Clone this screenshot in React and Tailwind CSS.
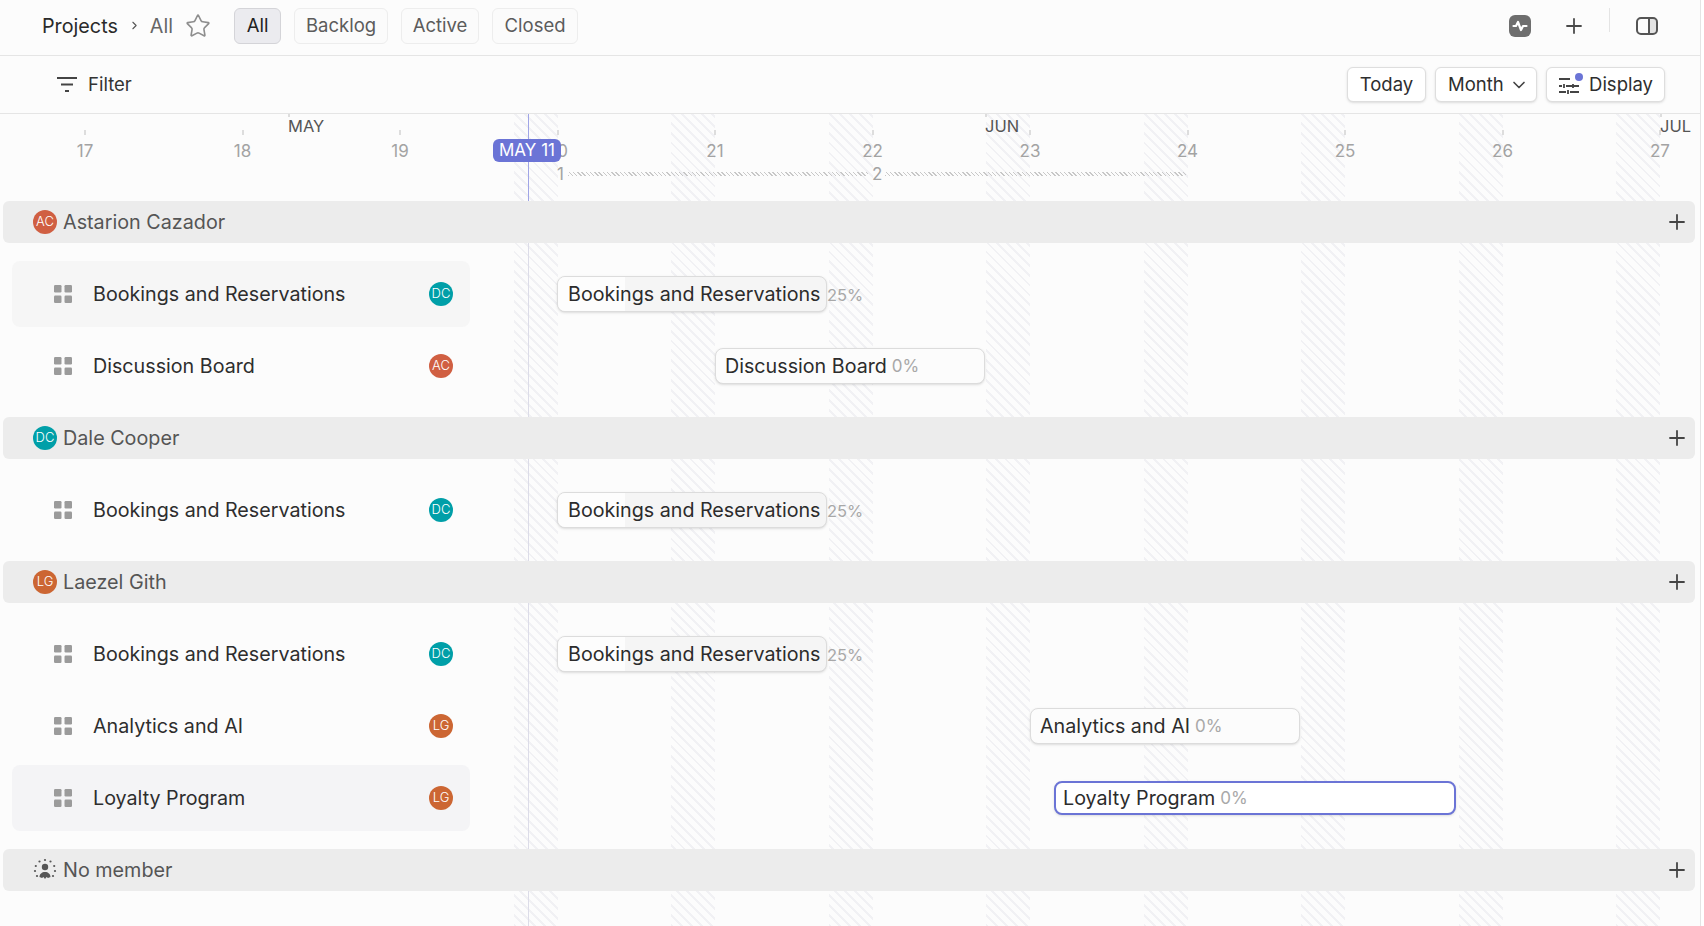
import { ChevronRight, Star, Plus, ChevronDown } from "lucide-react";

const days = [20, 21, 22, 23, 24, 25, 26, 27];
const hatch =
  "bg-[repeating-linear-gradient(45deg,#f1f1f4_0px,#f1f1f4_2px,transparent_2px,transparent_7px)]";
const weekDash =
  "bg-[repeating-linear-gradient(45deg,#c8c8c8_0px,#c8c8c8_1px,transparent_1px,transparent_3px)]";

const groups = [
  {
    name: "Astarion Cazador",
    initials: "AC",
    color: "bg-[#d05f42]",
    tasks: [
      { name: "Bookings and Reservations", who: "DC", color: "bg-[#009fa8]", left: "left-[557px]", pct: "25%", hover: "bg-[#f6f6f6]" },
      { name: "Discussion Board", who: "AC", color: "bg-[#d05f42]", left: "left-[715px]", pct: "0%" },
    ],
  },
  {
    name: "Dale Cooper",
    initials: "DC",
    color: "bg-[#009fa8]",
    tasks: [
      { name: "Bookings and Reservations", who: "DC", color: "bg-[#009fa8]", left: "left-[557px]", pct: "25%" },
    ],
  },
  {
    name: "Laezel Gith",
    initials: "LG",
    color: "bg-[#cc6633]",
    tasks: [
      { name: "Bookings and Reservations", who: "DC", color: "bg-[#009fa8]", left: "left-[557px]", pct: "25%" },
      { name: "Analytics and AI", who: "LG", color: "bg-[#cc6633]", left: "left-[1030px]", pct: "0%" },
      { name: "Loyalty Program", who: "LG", color: "bg-[#cc6633]", left: "left-[1054px]", pct: "0%", hover: "bg-[#f4f4f6]", selected: true },
    ],
  },
];

const Avatar = ({ text, color }) => (
  <div className={`w-6 h-6 rounded-full ${color} text-white text-[13px] font-light flex items-center justify-center shrink-0`}>
    {text}
  </div>
);

const Grip = () => (
  <svg width="18" height="18" viewBox="0 0 18 18" className="shrink-0" fill="#9b9b9b">
    <rect x="0" y="0" width="7.5" height="7.5" rx="1.2" />
    <rect x="10.5" y="0" width="7.5" height="7.5" rx="1.2" />
    <rect x="0" y="10.5" width="7.5" height="7.5" rx="1.2" />
    <rect x="10.5" y="10.5" width="7.5" height="7.5" rx="1.2" />
  </svg>
);

const GroupRow = ({ children, name }) => (
  <div className="relative h-[42px] ml-[3px] mr-[5px] bg-[#ececec] rounded-md flex items-center pl-[30px] pr-[6px] gap-[6px] text-[19.75px] text-[#555555]">
    {children}
    <span className="pt-[2px]">{name}</span>
    <Plus size={24} strokeWidth={1.8} className="ml-auto text-[#444444]" />
  </div>
);

const TaskBar = ({ task }) => {
  if (task.pct === "25%") {
    return (
      <div className={`absolute top-[15px] ${task.left} flex items-center`}>
        <div className="relative w-[270px] h-9 rounded-lg border border-[#dcdcdc] bg-[#f5f5f5] shadow-sm overflow-hidden flex items-center pl-[10px] text-[19.7px] text-[#2c2c2c]">
          <div className="absolute inset-y-0 left-0 w-[67px] bg-[#fdfdfd]" />
          <span className="relative pt-[2px]">{task.name}</span>
        </div>
        <span className="pt-[2px] text-[16.5px] text-[#a8a8a8]">25%</span>
      </div>
    );
  }
  return (
    <div
      className={`absolute ${task.left} flex items-center gap-[5px] rounded-lg text-[19.7px] text-[#2c2c2c] shadow-sm ${
        task.selected
          ? "top-[16px] w-[402px] h-[34px] border-2 border-[#6b74d6] bg-white pl-[7px]"
          : "top-[15px] w-[270px] h-9 border border-[#dcdcdc] bg-[#fcfcfc] pl-[9px]"
      }`}
    >
      <span className="pt-[2px]">{task.name}</span>
      <span className="pt-[2px] text-[17px] text-[#a8a8a8]">{task.pct}</span>
    </div>
  );
};

const TaskRow = ({ task }) => (
  <div className="relative h-[66px]">
    <div className={`ml-3 w-[458px] h-full rounded-lg flex items-center pl-[42px] pr-[17px] ${task.hover || ""}`}>
      <Grip />
      <span className="ml-[21px] pt-[2px] text-[19.7px] text-[#2e2e2e]">{task.name}</span>
      <div className="ml-auto">
        <Avatar text={task.who} color={task.color} />
      </div>
    </div>
    <TaskBar task={task} />
  </div>
);

const Tab = ({ label, active, className }) => (
  <button
    className={`h-9 rounded-md border text-[18.5px] ${className} ${
      active
        ? "bg-[#ebebef] border-[#d4d4d8] text-[#222222]"
        : "bg-[#fbfbfb] border-[#ededed] text-[#5c5c5c]"
    }`}
  >
    {label}
  </button>
);

const Btn = ({ children, className }) => (
  <button
    className={`h-[35px] flex items-center rounded-md border border-[#dedede] bg-white shadow-sm text-[18.5px] text-[#2e2e2e] ${className}`}
  >
    {children}
  </button>
);

const DayLabel = ({ day }) => (
  <div className="w-[157.5px] shrink-0 flex flex-col items-center">
    <div className="w-[2px] h-[5px] bg-[#dddddd]" />
    <span className="mt-[4px] text-[17px] leading-[24px] text-[#a3a3a3]">{day}</span>
  </div>
);

const MonthLabel = ({ label, left }) => (
  <div className={`absolute top-0 ${left} flex flex-col text-[16.5px] leading-[24px] text-[#555555]`}>
    <div className="w-[2px] h-[3px] bg-[#dddddd]" />
    <span className="-mt-[3px]">{label}</span>
  </div>
);

const App = () => {
  return (
    <div
      className="relative h-[926px] w-[1701px] overflow-hidden bg-[#fcfcfc] border-r border-[#e4e4e4]"
      style={{ fontFamily: "Inter, 'Noto Sans', sans-serif" }}
    >
      {/* hatched weekend columns sit behind everything */}
      <div className="absolute top-[114px] bottom-0 left-[400px] flex">
        {days.map((d) => (
          <div key={d} className="w-[157.5px] flex justify-end">
            <div className={`w-[44px] h-full ${hatch}`} />
          </div>
        ))}
      </div>
      {/* today line */}
      <div className="absolute top-[114px] bottom-0 left-[528px] w-px bg-[#dcdce8]" />
      <div className="absolute top-[114px] left-[528px] w-px h-[87px] bg-[#a0a5e6]" />

      <div className="relative">
        <div className="h-14 pb-[3px] border-b border-[#e5e5e5] flex items-center">
          <span className="ml-[42px] pt-[2px] text-[19.75px] text-[#2a2a2a]">Projects</span>
          <ChevronRight size={13} className="ml-[10px] mb-[2px] text-[#555555]" />
          <span className="ml-[9px] pt-[2px] text-[19.75px] text-[#666666]">All</span>
          <Star size={26} strokeWidth={1.5} className="ml-[12px] text-[#8e8e8e]" />
          <div className="ml-[23px] flex gap-[13px]">
            <Tab label="All" active className="w-[47px]" />
            <Tab label="Backlog" className="w-[94px]" />
            <Tab label="Active" className="w-[78px]" />
            <Tab label="Closed" className="w-[86px]" />
          </div>
          <div className="ml-auto flex items-center mr-[42px]">
            <div className="w-[22px] h-[22px] rounded-md bg-[#6e6e6e] flex items-center justify-center">
              <svg width="16" height="14" viewBox="0 0 16 14" fill="none" stroke="white" strokeWidth="2.2" strokeLinecap="round" strokeLinejoin="round">
                <path d="M1.5 7h2.500l2-4 3 8 2-4h3.500" />
              </svg>
            </div>
            <Plus size={24} strokeWidth={1.8} className="ml-[31px] text-[#4a4a4a]" />
            <div className="ml-[23px] w-px h-6 bg-[#e4e4e4] mb-[12px]" />
            <svg width="22" height="20" viewBox="0 0 22 20" fill="none" stroke="#555555" strokeWidth="2" className="ml-[26px]">
              <rect x="1" y="2" width="20" height="16" rx="4" />
              <path d="M13 2v16" />
              <path d="M13 3h5a2 2 0 0 1 2 2v10a2 2 0 0 1-2 2h-5z" fill="#555555" fillOpacity="0.15" stroke="none" />
            </svg>
          </div>
        </div>

        <div className="h-[58px] border-b border-[#e5e5e5] flex items-center">
          <svg width="22" height="17" viewBox="0 0 22 17" fill="none" stroke="#444444" strokeWidth="2" className="ml-[56px]">
            <path d="M1 2h20M5 8.500h12M9 15h4" />
          </svg>
          <span className="ml-[10px] text-[18.5px] text-[#333333]">Filter</span>
          <div className="ml-auto mr-[35px] flex gap-[9px]">
            <Btn className="w-[79px] justify-center">Today</Btn>
            <Btn className="w-[102px] pl-[12px] gap-[5px]">
              Month
              <ChevronDown size={20} strokeWidth={2} className="text-[#444444]" />
            </Btn>
            <Btn className="w-[119px] justify-center gap-[9px]">
              <span className="relative">
                <svg width="22" height="20" viewBox="0 0 22 20" fill="none" stroke="#444444" strokeWidth="1.8">
                  <path d="M1 4h11M1 11h3M8 11h13M1 17h7M12 17h9M6 9v4M15 9v4M10 15v4" />
                </svg>
                <span className="absolute -top-[2px] right-[-3px] w-2 h-2 rounded-full bg-[#6b74d6]" />
              </span>
              Display
            </Btn>
          </div>
        </div>

        {/* timeline header */}
        <div className="relative h-[87px]">
          <div className="flex pl-[6.25px]">
            {[17, 18, 19, 20, 21, 22, 23, 24, 25, 26, 27].map((d) => (
              <div key={d} className="pt-[16px]">
                <DayLabel day={d} />
              </div>
            ))}
          </div>
          <MonthLabel label="MAY" left="left-[288px]" />
          <MonthLabel label="JUN" left="left-[985px]" />
          <MonthLabel label="JUL" left="left-[1660px]" />
          <div className="absolute top-[25px] left-[493px] w-[68px] h-[23px] rounded-md bg-[#6b74d6] text-white text-[17px] flex items-center justify-center">
            MAY 11
          </div>
          {/* week numbers */}
          <div className="absolute top-[50px] left-[557px] flex items-center text-[17px] leading-[20px] text-[#a3a3a3]">
            <span className="w-[8px]">1</span>
            <div className={`ml-[3px] w-[300px] h-1 ${weekDash}`} />
            <span className="ml-[4px]">2</span>
            <div className={`ml-[3px] w-[301px] h-1 ${weekDash}`} />
          </div>
        </div>

        {groups.map((g) => (
          <div key={g.name}>
            <GroupRow name={g.name}>
              <Avatar text={g.initials} color={g.color} />
            </GroupRow>
            <div className="py-[18px] flex flex-col gap-[6px]">
              {g.tasks.map((t) => (
                <TaskRow key={t.name} task={t} />
              ))}
            </div>
          </div>
        ))}

        <GroupRow name="No member">
          <svg width="24" height="24" viewBox="0 0 24 24" className="shrink-0" fill="#555555">
            <circle cx="12" cy="9" r="3.2" />
            <path d="M6.5 19c0-3 2.5-5 5.5-5s5.500 2 5.500 5l-2.500 1-1.500-1-1.500 2-1.500-2-1.500 1z" />
            <circle cx="12" cy="2" r="1.1" />
            <circle cx="6.500" cy="3.500" r="1.100" />
            <circle cx="17.500" cy="3.500" r="1.100" />
            <circle cx="2.800" cy="8" r="1.100" />
            <circle cx="21.200" cy="8" r="1.100" />
            <circle cx="2" cy="13" r="1.100" />
            <circle cx="22" cy="13" r="1.100" />
            <circle cx="4" cy="18" r="1.100" />
            <circle cx="20" cy="18" r="1.100" />
          </svg>
        </GroupRow>
      </div>
    </div>
  );
};

export default App;
